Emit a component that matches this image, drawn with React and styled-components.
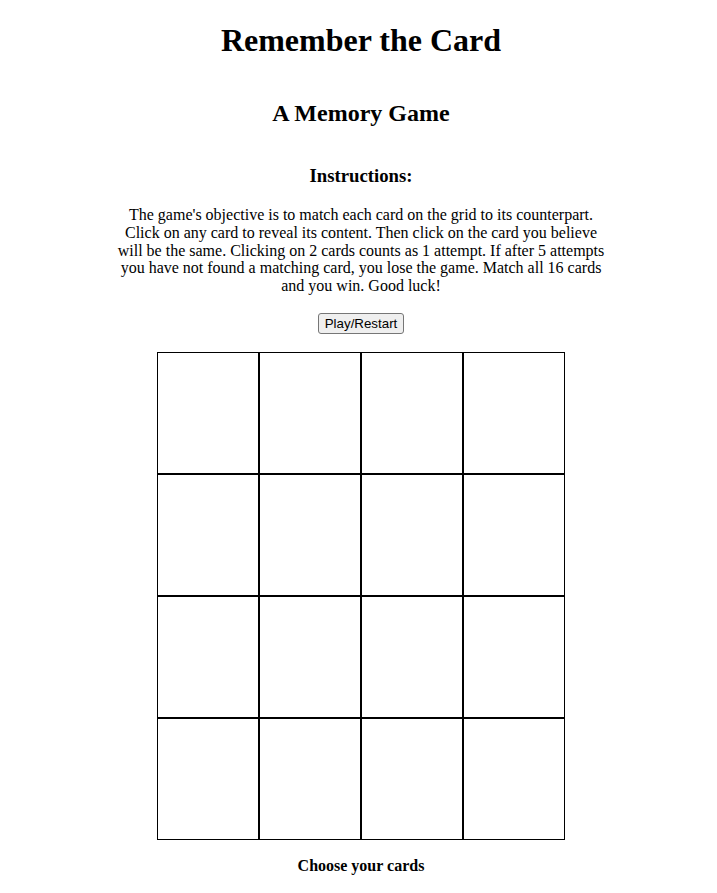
import React from 'react';
import styled, { createGlobalStyle } from 'styled-components';

const GlobalStyle = createGlobalStyle`
  body {
    margin: 0;
    font-family: "Liberation Serif", "Times New Roman", serif;
    color: #000;
    background: #fff;
  }
`

const Page = styled.div`
  display: flex;
  flex-direction: column;
  align-items: center;
  text-align: center;
  padding-left: 5px;
`

const Title = styled.h1`
  font-size: 32px;
  line-height: 35.4px;
  margin: 23px 0 0;
`

const Subtitle = styled.h2`
  font-size: 24px;
  line-height: 26.6px;
  margin: 42px 0 0;
`

const SectionTitle = styled.h3`
  font-size: 18.72px;
  line-height: 20.7px;
  margin: 39.3px 0 0;
`

const Instructions = styled.p`
  width: 490px;
  font-size: 16px;
  line-height: 17.7px;
  margin: 19.3px 0 0;
`

const PlayButton = styled.button`
  margin-top: 18.5px;
  font-family: Arial, "Liberation Sans", sans-serif;
  font-size: 13.33px;
  line-height: 15px;
  padding: 2px 6px;
  border: 1px solid #767676;
  border-radius: 3px;
  background: #efefef;
  color: #000;
`

const Board = styled.div`
  margin-top: 17.7px;
  display: grid;
  grid-template-columns: repeat(4, 102px);
  grid-auto-rows: 122px;
`

const Card = styled.div`
  border: 1px solid #000;
  background: #fff;
`

const Status = styled.h4`
  font-size: 16px;
  line-height: 17.7px;
  margin: 17.4px 0 0;
`

export default function App() {
  const cards = Array.from({ length: 16 }, (_, i) => i)
  return (
    <>
      <GlobalStyle />
      <Page>
        <Title>Remember the Card</Title>
        <Subtitle>A Memory Game</Subtitle>
        <SectionTitle>Instructions:</SectionTitle>
        <Instructions>
          The game's objective is to match each card on the grid to its counterpart.
          Click on any card to reveal its content. Then click on the card you believe
          will be the same. Clicking on 2 cards counts as 1 attempt. If after 5 attempts
          you have not found a matching card, you lose the game. Match all 16 cards
          and you win. Good luck!
        </Instructions>
        <PlayButton>Play/Restart</PlayButton>
        <Board>
          {cards.map(i => <Card key={i} />)}
        </Board>
        <Status>Choose your cards</Status>
      </Page>
    </>
  );
}
